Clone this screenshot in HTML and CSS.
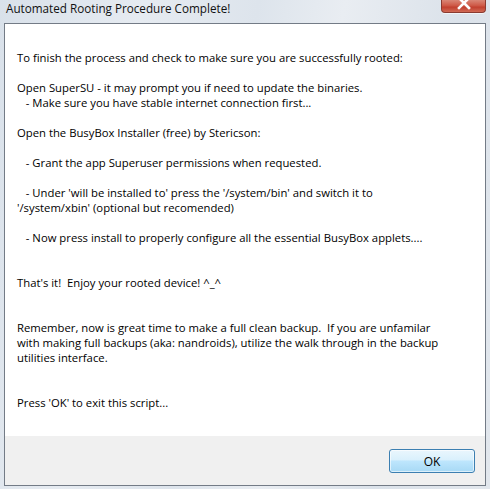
FILE: index.html
```html
<!DOCTYPE html>
<html>
<head>
<meta charset="utf-8">
<link rel="stylesheet" href="styles.css">
</head>
<body>
<div class="window">
  <div class="titlebar">
    <span class="title">Automated Rooting Procedure Complete!</span>
    <div class="close"><svg width="14" height="10" viewBox="0 0 14 10"><path d="M2 -2 L12 8 M12 -2 L2 8" stroke="#fff" stroke-width="2.6" stroke-linecap="square"/></svg></div>
  </div>
  <div class="panel">
    <div class="content"><div class="text">To finish the process and check to make sure you are successfully rooted:

Open SuperSU - it may prompt you if need to update the binaries.
   - Make sure you have stable internet connection first...

Open the BusyBox Installer (free) by Stericson:

   - Grant the app Superuser permissions when requested.

   - Under 'will be installed to' press the '/system/bin' and switch it to
'/system/xbin' (optional but recomended)

   - Now press install to properly configure all the essential BusyBox applets....


That's it!  Enjoy your rooted device! ^_^


Remember, now is great time to make a full clean backup.  If you are unfamilar
with making full backups (aka: nandroids), utilize the walk through in the backup
utilities interface.


Press 'OK' to exit this script...</div></div>
    <div class="footer">
      <button class="ok">OK</button>
    </div>
  </div>
</div>
</body>
</html>
```
FILE: styles.css
```css
html, body {
  margin: 0;
  padding: 0;
}
body {
  width: 490px;
  height: 489px;
  overflow: hidden;
  background: #dfe5ec;
}
.window {
  width: 490px;
  height: 489px;
  box-sizing: border-box;
  display: flex;
  flex-direction: column;
  padding: 0 4px 3px 4px;
  background: linear-gradient(100deg, #d9e1ea 0%, #e6ebf1 25%, #dde4ec 45%, #e9edf2 60%, #dbe2ea 80%, #e2e7ed 100%);
}
.titlebar {
  height: 23px;
  display: flex;
  align-items: flex-start;
  flex-shrink: 0;
}
.title {
  font-family: "Open Sans", "Noto Sans", sans-serif;
  font-size: 11.7px;
  color: #111;
  margin-left: 2px;
  margin-top: -1px;
  line-height: 18px;
}
.close {
  margin-left: auto;
  margin-right: 0;
  width: 45px;
  height: 13px;
  box-sizing: border-box;
  border: 1px solid #8a3a30;
  border-top: none;
  border-radius: 0 0 4px 4px;
  background: linear-gradient(180deg, #d98676 0%, #cf5a48 45%, #c2402f 60%, #d06a55 100%);
  display: flex;
  justify-content: center;
  align-items: flex-start;
  box-shadow: 0 1px 0 rgba(255,255,255,0.6);
}
.close svg {
  display: block;
}
.panel {
  flex: 1;
  display: flex;
  flex-direction: column;
  border: 1px solid #737b86;
  background: #fff;
}
.content {
  flex: 1;
  background: #fff;
  padding: 26px 0 0 12px;
}
.text {
  white-space: pre;
  font-family: "Open Sans", "Noto Sans", sans-serif;
  font-size: 11.3px;
  line-height: 15px;
  color: #000;
}
.footer {
  height: 49px;
  flex-shrink: 0;
  background: #f0f0f0;
  display: flex;
  justify-content: flex-end;
  align-items: flex-start;
  padding: 13px 10px 0 0;
  box-sizing: border-box;
}
.ok {
  width: 86px;
  height: 24px;
  border: 1px solid #3c7fb1;
  border-radius: 3px;
  background: linear-gradient(180deg, #eaf6fd 0%, #d9f0fc 45%, #bee6fd 50%, #a7d9f5 100%);
  box-shadow: inset 0 0 0 1px rgba(255,255,255,0.6);
  font-family: "Open Sans", "Noto Sans", sans-serif;
  font-size: 12px;
  color: #000;
  padding: 0;
}
```
